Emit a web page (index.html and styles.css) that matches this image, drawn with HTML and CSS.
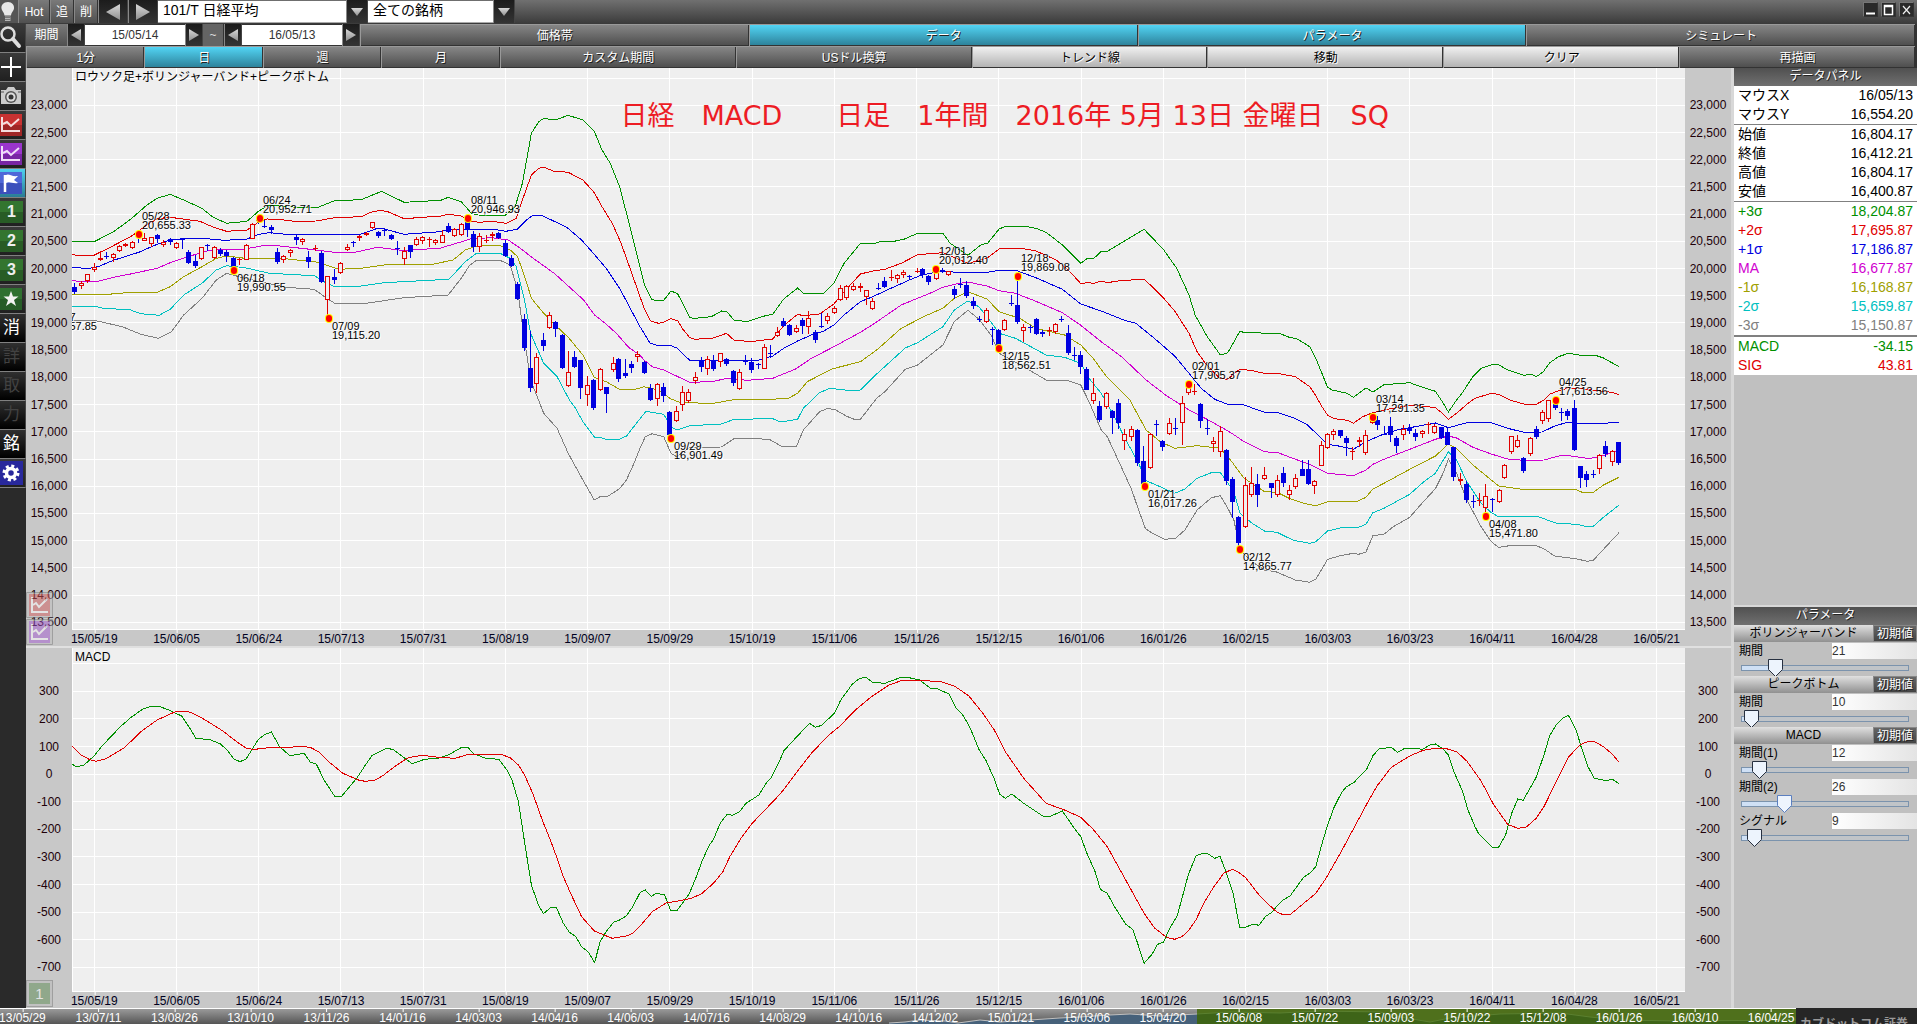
FILE: index.html
```html
<!DOCTYPE html>
<html lang="ja">
<head>
<meta charset="utf-8">
<title>101/T 日経平均</title>
<link rel="stylesheet" href="styles.css">
</head>
<body>
<header class="topbar">
  <button class="tool bulb" aria-label="ヒント"><svg width="18" height="22" viewBox="0 0 18 22"><path d="M8 1C3.500 1 1 4 1.500 7.500C2 10.500 4 11 4.500 14.500H11C11.500 11 13.500 10.500 14 7.500C14.500 4 12 1 8 1Z" fill="#e8e8e8"/><path d="M5 15.500h5.500v4.500h-5.500z" fill="#b5b5b5"/><path d="M5 16.500h5.500M5 18.500h5.500" stroke="#777"/></svg></button>
  <button class="tool hot">Hot</button>
  <button class="tool kanji">追</button>
  <button class="tool kanji">削</button>
  <button class="arrow wide" aria-label="前の銘柄"><svg width="14" height="16" viewBox="0 0 14 16"><path d="M14 0V16L0 8Z" fill="url(#metal)"/></svg></button>
  <button class="arrow wide" aria-label="次の銘柄"><svg width="14" height="16" viewBox="0 0 14 16"><path d="M0 0V16L14 8Z" fill="url(#metal)"/></svg></button>
  <select class="symbol" aria-label="銘柄"><option>101/T 日経平均</option></select>
  <button class="arrow drop" aria-label="銘柄を開く"><svg width="12" height="8" viewBox="0 0 12 8"><path d="M0 0H12L6 8Z" fill="url(#metal)"/></svg></button>
  <select class="group" aria-label="グループ"><option>全ての銘柄</option></select>
  <button class="arrow drop" aria-label="グループを開く"><svg width="12" height="8" viewBox="0 0 12 8"><path d="M0 0H12L6 8Z" fill="url(#metal)"/></svg></button>
  <div class="window-buttons">
    <button aria-label="最小化"><svg width="13" height="13" viewBox="0 0 13 13"><path d="M2 10.500H11" stroke="#fff" stroke-width="2"/></svg></button>
    <button aria-label="最大化"><svg width="13" height="13" viewBox="0 0 13 13"><path d="M2.500 2.500h8v9h-8zM2 3.500h9" stroke="#fff" fill="none" stroke-width="1.500"/></svg></button>
    <button aria-label="閉じる"><svg width="13" height="13" viewBox="0 0 13 13"><path d="M3 3L10 11M10 3L3 11" stroke="#eee" stroke-width="1.200"/></svg></button>
  </div>
  <svg class="defs" width="0" height="0"><defs><linearGradient id="metal" x1="0" y1="0" x2="0" y2="1"><stop offset="0" stop-color="#d8d8d8"/><stop offset="1" stop-color="#909090"/></linearGradient></defs></svg>
</header>

<div class="workspace">
  <nav class="sidebar" aria-label="ツール">
    <button aria-label="検索"><svg viewBox="0 0 26 28"><circle cx="8" cy="10" r="6.500" fill="none" stroke="#ddd" stroke-width="2.500"/><path d="M13 15L19 22" stroke="#ddd" stroke-width="4" stroke-linecap="round"/></svg></button>
    <button aria-label="十字"><svg viewBox="0 0 26 28"><path d="M11 4V24M1 14H21" stroke="#fff" stroke-width="2"/></svg></button>
    <button aria-label="撮影"><svg viewBox="0 0 26 28"><path d="M1 8H6L8 5H14L16 8H21V22H1Z" fill="#ccc"/><circle cx="11" cy="15" r="6" fill="#555"/><circle cx="11" cy="15" r="4.500" fill="#ddd"/><circle cx="11" cy="15" r="2.500" fill="#333"/><path d="M1 10h3M18 10h3" stroke="#555"/></svg></button>
    <button aria-label="赤チャート"><svg viewBox="0 0 26 28"><path d="M0 3H22V25H0Z" fill="#c83232"/><path d="M0 14H22V25H0Z" fill="#a02626"/><path d="M2 6V20H20M3 13L7 11L11 15L19 8" fill="none" stroke="#f4dede" stroke-width="2"/></svg></button>
    <button aria-label="紫チャート"><svg viewBox="0 0 26 28"><path d="M0 3H22V25H0Z" fill="#9a35cc"/><path d="M0 14H22V25H0Z" fill="#7826a4"/><path d="M2 6V20H20M3 13L7 11L11 15L19 8" fill="none" stroke="#efdef8" stroke-width="2"/></svg></button>
    <button class="on" aria-label="フラグ"><svg viewBox="0 0 26 28"><path d="M0 3H22V25H0Z" fill="#4f68d8"/><path d="M0 14H22V25H0Z" fill="#3c50bc"/><path d="M5 6V23" stroke="#fff" stroke-width="2.500"/><path d="M6 6C9 4 11 8 18 7L14 11L18 14C12 15 10 12 6 14Z" fill="#fff"/></svg></button>
    <button><span class="green">1</span></button>
    <button><span class="green">2</span></button>
    <button><span class="green">3</span></button>
    <button aria-label="お気に入り"><svg viewBox="0 0 26 28"><path d="M0 3H22V25H0Z" fill="#2f7030"/><path d="M0 14H22V25H0Z" fill="#265c27"/><path d="M11 6L13 11.500H18.500L14 15L16 21L11 17.500L6 21L8 15L3.500 11.500H9Z" fill="#f2f2f2"/></svg></button>
    <button class="dark">消</button>
    <button class="dark" disabled>詳</button>
    <button class="dark" disabled>取</button>
    <button class="dark" disabled>力</button>
    <button class="dark">銘</button>
    <button aria-label="設定"><svg viewBox="0 0 26 28"><path d="M0 2H23V26H0Z" fill="#28289c"/><circle cx="11" cy="14" r="4.500" fill="none" stroke="#fff" stroke-width="3.500"/><circle cx="11" cy="14" r="7" fill="none" stroke="#fff" stroke-width="3" stroke-dasharray="3 2.500"/></svg></button>
  </nav>

  <div class="main">
    <div class="row period">
      <span class="cell">期間</span>
      <button class="arrow" aria-label="開始を前へ"><svg width="10" height="12" viewBox="0 0 10 12"><path d="M10 0V12L0 6Z" fill="url(#metal)"/></svg></button>
      <input type="text" value="15/05/14" aria-label="開始日">
      <button class="arrow" aria-label="開始を次へ"><svg width="10" height="12" viewBox="0 0 10 12"><path d="M0 0V12L10 6Z" fill="url(#metal)"/></svg></button>
      <span class="tilde">~</span>
      <button class="arrow" aria-label="終了を前へ"><svg width="10" height="12" viewBox="0 0 10 12"><path d="M10 0V12L0 6Z" fill="url(#metal)"/></svg></button>
      <input type="text" value="16/05/13" aria-label="終了日">
      <button class="arrow" aria-label="終了を次へ"><svg width="10" height="12" viewBox="0 0 10 12"><path d="M0 0V12L10 6Z" fill="url(#metal)"/></svg></button>
      <button class="tab">価格帯</button>
      <button class="tab active">データ</button>
      <button class="tab active">パラメータ</button>
      <button class="tab">シミュレート</button>
    </div>
    <div class="row">
      <button class="tab">1分</button>
      <button class="tab active">日</button>
      <button class="tab">週</button>
      <button class="tab">月</button>
      <button class="tab double">カスタム期間</button>
      <button class="tab double">USドル換算</button>
      <button class="tab double light">トレンド線</button>
      <button class="tab double light">移動</button>
      <button class="tab double light">クリア</button>
      <button class="tab double">再描画</button>
    </div>

    <div class="content">
      <main class="charts">
        <section class="chart price">
          <div class="y-axis left" data-axis="price"></div>
          <div class="plot">
            <svg id="price" viewBox="72 68 1613 562" preserveAspectRatio="none"></svg>
            <div class="marks" id="marks"></div>
            <div class="caption">ロウソク足+ボリンジャーバンド+ピークボトム</div>
            <div class="headline">日経　MACD　　日足　1年間　2016年 5月 13日 金曜日　SQ</div>
          </div>
          <div class="y-axis" data-axis="price"></div>
          <div class="x-axis"></div>
          <div class="badges">
            <svg width="27" height="26" viewBox="0 0 27 26"><path d="M.5 .5H26.500V25.500H.5Z" fill="#c0c0c0" stroke="#777"/><path d="M3 2H24V24H3Z" fill="#d05a5a"/><path d="M6 5V20H22M7 13L10 11L13 15L21 7" fill="none" stroke="#fff" stroke-width="2"/></svg>
            <svg width="27" height="26" viewBox="0 0 27 26"><path d="M.5 .5H26.500V25.500H.5Z" fill="#c0c0c0" stroke="#777"/><path d="M3 2H24V24H3Z" fill="#a45ad0"/><path d="M6 5V20H22M7 13L10 11L13 15L21 7" fill="none" stroke="#fff" stroke-width="2"/></svg>
          </div>
        </section>
        <section class="chart macd">
          <div class="y-axis left" data-axis="macd"></div>
          <div class="plot">
            <svg id="macd" viewBox="72 648 1613 344" preserveAspectRatio="none"></svg>
            <div class="caption">MACD</div>
          </div>
          <div class="y-axis" data-axis="macd"></div>
          <div class="x-axis"></div>
          <div class="badges"><span class="one">1</span></div>
        </section>
      </main>

      <aside class="panel">
        <h2>データパネル</h2>
        <table>
          <tbody><tr><th>マウスX</th><td>16/05/13</td></tr><tr><th>マウスY</th><td>16,554.20</td></tr></tbody>
          <tbody><tr><th>始値</th><td>16,804.17</td></tr><tr><th>終値</th><td>16,412.21</td></tr><tr><th>高値</th><td>16,804.17</td></tr><tr><th>安値</th><td>16,400.87</td></tr></tbody>
          <tbody><tr class="c-green"><th>+3σ</th><td>18,204.87</td></tr><tr class="c-red"><th>+2σ</th><td>17,695.87</td></tr><tr class="c-blue"><th>+1σ</th><td>17,186.87</td></tr><tr class="c-magenta"><th>MA</th><td>16,677.87</td></tr><tr class="c-olive"><th>-1σ</th><td>16,168.87</td></tr><tr class="c-cyan"><th>-2σ</th><td>15,659.87</td></tr><tr class="c-gray"><th>-3σ</th><td>15,150.87</td></tr></tbody>
          <tbody class="thick"><tr class="c-green"><th>MACD</th><td>-34.15</td></tr><tr class="c-red"><th>SIG</th><td>43.81</td></tr></tbody>
        </table>
        <div class="params">
          <h2>パラメータ</h2>
          <div class="param-head"><h3>ボリンジャーバンド</h3><button>初期値</button></div>
          <div class="param"><label for="p1">期間</label><input id="p1" type="text" value="21"></div>
          <input class="slider" style="--f:20%" type="range" min="2" max="114" value="21" aria-label="ボリンジャーバンド 期間">
          <div class="param-head"><h3>ピークボトム</h3><button>初期値</button></div>
          <div class="param"><label for="p2">期間</label><input id="p2" type="text" value="10"></div>
          <input class="slider" style="--f:5%" type="range" min="9" max="86" value="10" aria-label="ピークボトム 期間">
          <div class="param-head"><h3>MACD</h3><button>初期値</button></div>
          <div class="param"><label for="p3">期間(1)</label><input id="p3" type="text" value="12"></div>
          <input class="slider" style="--f:10%" type="range" min="2" max="153" value="12" aria-label="MACD 期間(1)">
          <div class="param"><label for="p4">期間(2)</label><input id="p4" type="text" value="26"></div>
          <input class="slider lit" style="--f:25%" type="range" min="2" max="107" value="26" aria-label="MACD 期間(2)">
          <div class="param"><label for="p5">シグナル</label><input id="p5" type="text" value="9"></div>
          <input class="slider" style="--f:7%" type="range" min="2" max="208" value="9" aria-label="MACD シグナル">
        </div>
      </aside>
    </div>
  </div>
</div>

<footer class="navigator">
  <div class="timeline" id="timeline">
    <svg viewBox="0 1009 1796 15" preserveAspectRatio="none">
      <path d="M889 1024V1023L905 1022L920 1020L945 1021L958 1023L980 1020L1000 1022L1060 1018L1080 1017L1110 1015L1130 1014L1160 1016L1197 1014V1024Z" fill="#46617a"/>
      <path d="M889 1023L905 1022L920 1020L945 1021L958 1023L980 1020L1000 1022L1060 1018L1080 1017L1110 1015L1130 1014L1160 1016L1197 1014" fill="none" stroke="#c0c0c0"/>
      <path d="M1197 1009H1796V1024H1197Z" fill="#4f701c"/>
      <path d="M1197 1014L1230 1012L1280 1013L1320 1011L1380 1012L1400 1017L1430 1022L1450 1018L1500 1014L1560 1013L1590 1017L1620 1020L1680 1021L1796 1020V1024H1197Z" fill="#3e6418"/>
      <path d="M1197 1014L1230 1012L1280 1013L1320 1011L1380 1012L1400 1017L1430 1022L1450 1018L1500 1014L1560 1013L1590 1017L1620 1020L1680 1021L1796 1020" fill="none" stroke="#5b8030"/>
    </svg>
  </div>
  <div class="brand">カブドットコム証券</div>
</footer>
<script src="chart.js"></script>
</body>
</html>
```

FILE: styles.css
```css
* { box-sizing: border-box; }
body {
  margin: 0;
  height: 100vh;
  display: flex;
  flex-direction: column;
  overflow: hidden;
  background: #262626;
  color: #000;
  font: 12px/16px "Liberation Sans", "Noto Sans CJK JP", sans-serif;
}
button, input, select { font: inherit; border: 0; border-radius: 0; margin: 0; padding: 0; }
button { display: flex; align-items: center; justify-content: center; overflow: hidden; white-space: nowrap; }
h2, h3 { margin: 0; font-size: 12px; font-weight: 400; text-align: center; }

/* top bar */
.topbar { flex: none; display: flex; height: 24px; background: linear-gradient(#707070, #3a3a3a); }
.defs { position: absolute; }
.tool { height: 23px; color: #fff; background: linear-gradient(#7a7a7a, #505050); border-right: 1px solid #333; border-left: 1px solid #888; }
.bulb { width: 18px; background: #555; border: 0; }
.hot { width: 32px; }
.kanji { width: 24px; }
.arrow { flex: none; width: 18px; background: linear-gradient(#1c1c1c, #343434); border-left: 1px solid #888; border-right: 1px solid #444; }
.arrow.wide { width: 30px; height: 23px; }
.arrow.drop { width: 22px; height: 23px; }
.topbar select { appearance: none; height: 22px; margin-top: 1px; padding: 0 0 3px 5px; font-size: 14px; background: #fff; color: #000; border-bottom: 1px solid #aaa; }
.symbol { width: 188px; }
.group { width: 125px; }
.window-buttons { margin-left: auto; display: flex; gap: 3px; padding: 2px 3px 0 0; }
.window-buttons button { width: 15px; height: 15px; background: #2a2a2a; border: 1px solid #777; border-right-color: #333; border-bottom-color: #333; }

/* left tool strip */
.workspace { flex: 1; min-height: 0; display: flex; }
.sidebar { flex: none; width: 26px; display: flex; flex-direction: column; background: #2a2a2a; }
.sidebar button { flex: none; width: 26px; height: 29px; justify-content: flex-start; background: linear-gradient(#3a3a3a, #202020); border-right: 1px solid #444; border-bottom: 1px solid #808080; }
.sidebar svg { flex: none; width: 26px; height: 28px; }
.sidebar .on { background: linear-gradient(#4fd0f0, #2a7c94); }
.green { width: 23px; height: 22px; line-height: 22px; font-size: 16px; font-weight: 700; color: #eee; background: linear-gradient(#33752f 50%, #285c25 50%); }
.sidebar .dark { font-size: 17px; padding-left: 3px; color: #fff; background: linear-gradient(#303030, #000); }
.sidebar .dark:disabled { color: #424242; }

/* tab rows */
.main { flex: 1; min-width: 0; display: flex; flex-direction: column; }
.row { flex: none; display: flex; height: 22px; padding-right: 2px; background: #333; }
.tab { flex: 1 1 0; color: #fff; background: linear-gradient(#868686, #4c4c4c); border: solid #999; border-width: 1px 0 0 1px; box-shadow: inset -1px -1px #333; text-shadow: 1px 1px #222; }
.tab.double { flex-grow: 2; }
.tab.active { background: linear-gradient(#52d4f4, #2c7f97); }
.tab.light { color: #000; background: linear-gradient(#f0f0f0, #b0b0b0); text-shadow: 1px 1px #fff; }
.cell { width: 41px; line-height: 22px; text-align: center; color: #fff; background: linear-gradient(#7a7a7a, #505050); }
.tilde { width: 20px; margin-right: 1px; line-height: 22px; text-align: center; color: #ddd; background: #646464; }
.period input { width: 100px; height: 20px; margin-top: 1px; text-align: center; color: #333; background: #fff; }

/* charts */
.content { flex: 1; min-height: 0; display: flex; }
.charts { flex: 1; min-width: 0; display: flex; flex-direction: column; gap: 2px; background: #e0e0e0; }
.chart { position: relative; display: grid; grid-template-columns: 46px minmax(0, 1fr) 46px; grid-template-rows: minmax(0, 1fr) 16px; background: #c8c8c8; min-height: 0; }
.price { flex: 578 1 0; }
.macd { flex: 360 1 0; }
.plot { position: relative; overflow: hidden; background: #efefef; }
.plot svg { position: absolute; inset: 0; width: 100%; height: 100%; }
.caption { position: relative; padding: 1px 3px; }
.headline { position: absolute; left: 34%; top: 28px; font: 27px/40px "DejaVu Sans", "Noto Sans CJK JP", sans-serif; color: #ed1c24; white-space: pre; }
.y-axis { position: relative; color: #200008; }
.y-axis span { position: absolute; left: 0; width: 100%; margin-top: -8px; text-align: center; }
.x-axis { position: relative; grid-column: 2; color: #000020; }
.x-axis span { position: absolute; top: 1px; transform: translateX(-50%); }
.x-axis span::before, .timeline span::before { content: ""; position: absolute; left: 50%; top: -1px; width: 1px; height: 3px; background: #fff; }
.mark { position: absolute; width: 6px; height: 7px; margin: -3px; border-radius: 3px; background: #f00; box-shadow: 0 0 0 1px #ff0; }
.peak { position: absolute; margin-left: 3px; font-size: 11px; line-height: 9px; white-space: pre; text-shadow: 1px 1px #fff; }
.peak.above { margin-top: -22px; }
.peak.below { margin-top: 4px; }
.badges { position: absolute; left: 0; bottom: 0; display: flex; flex-direction: column; gap: 1px; padding-bottom: 1px; opacity: .5; }
.one { width: 27px; height: 27px; line-height: 22px; font-size: 15px; text-align: center; color: #fff; background: #5a8a50; border: 3px solid #bbb; outline: 1px solid #777; outline-offset: -1px; }

/* right panel */
.panel { flex: none; width: 186px; display: flex; flex-direction: column; background: #c0c0c0; border-left: 3px solid #d8d8d8; }
.panel h2 { height: 18px; line-height: 17px; color: #fff; background: linear-gradient(#505050, #707070); text-shadow: 1px 1px #222; }
.panel table { width: 100%; border-collapse: collapse; background: #fff; font-size: 14px; line-height: 19px; }
.panel th, .panel td { padding: 0 4px; font-weight: 400; text-align: left; height: 19px; }
.panel td { text-align: right; }
.panel tbody + tbody { border-top: 1px solid #808080; }
.panel tbody.thick { border-top: 2px solid #808080; }
.c-green { color: #009000; }
.c-red { color: #e00000; }
.c-blue { color: #0000e0; }
.c-magenta { color: #d000d0; }
.c-olive { color: #a0a000; }
.c-cyan { color: #00c0c0; }
.c-gray { color: #808080; }
.params { height: 403px; margin-top: auto; border-top: 2px solid #d8d8d8; display: flex; flex-direction: column; }
.param-head { display: flex; height: 17px; }
.param-head h3 { flex: 1; line-height: 17px; background: linear-gradient(#e0e0e0, #909090); }
.param-head button { width: 44px; color: #fff; background: linear-gradient(#666, #444); border: 1px solid #888; text-shadow: 1px 1px #222; }
.param { display: flex; height: 17px; padding-top: 1px; }
.param label { flex: 1; padding-left: 5px; }
.param input { width: 85px; height: 16px; color: #333; background: linear-gradient(90deg, #fff, #e4e4e4); }
.slider {
  --thumb: url("data:image/svg+xml,%3Csvg xmlns='http://www.w3.org/2000/svg' width='15' height='18'%3E%3Cpath d='M.5.5h14v10l-7 7-7-7z' fill='%23edf4fd' stroke='%23273040'/%3E%3C/svg%3E");
  appearance: none; flex: none; width: auto; height: 17px; margin: 0 8px 0 7px; background: none;
}
.slider.lit { --thumb: url("data:image/svg+xml,%3Csvg xmlns='http://www.w3.org/2000/svg' width='15' height='18'%3E%3Cpath d='M.5.5h14v10l-7 7-7-7z' fill='%23edf4fd' stroke='%235b7fc0'/%3E%3C/svg%3E"); }
.slider::-webkit-slider-runnable-track { height: 6px; border: 1px solid #7b93ad; background: linear-gradient(90deg, #cfe0f5 var(--f), #c0c4c8 var(--f)); }
.slider::-webkit-slider-thumb { appearance: none; width: 15px; height: 18px; margin-top: -7px; background: var(--thumb); }

/* bottom navigator */
.navigator { flex: none; display: flex; height: 16px; }
.timeline { position: relative; flex: 1; overflow: hidden; border-top: 1px solid #fff; color: #fff; background: linear-gradient(#999, #555); }
.timeline svg { position: absolute; inset: 0; width: 100%; height: 100%; }
.timeline span { position: absolute; top: 1px; transform: translateX(-50%); }
.brand { width: 121px; padding: 8px 0 0 4px; overflow: hidden; white-space: nowrap; font-weight: 700; color: #999; background: #262626; }
```

FILE: chart.js
```js
// Chart space: x 72..1685; price pane y 68..630; MACD pane y 648..992.
const X0 = 72, W = 1613;
const dates = "15/05/19 15/06/05 15/06/24 15/07/13 15/07/31 15/08/19 15/09/07 15/09/29 15/10/19 15/11/06 15/11/26 15/12/15 16/01/06 16/01/26 16/02/15 16/03/03 16/03/23 16/04/11 16/04/28 16/05/21".split(" ");
const dateX = i => 94.3 + 82.23 * i;
const priceY = v => 105.3 + (23000 - v) * 0.05442;
const macdY = v => 691.3 + (300 - v) * 0.276;

// Each series is stored in three spans; a span has its own origin.
const SX = 2.45, SY = 3;
const price = [[0, 0], [640, 200], [1277, 360]];
const lower = [[0, 660], [640, 660], [1277, 600]];

const bands = [
  ["#009000",
   "177,724 200,726 231,725 278,695 320,658 360,615 385,595 417,583 450,600 495,625 520,650 555,670 605,664 635,632 660,615 700,620 775,624 820,602 885,599 935,574 990,607 1080,601 1098,592 1130,605 1155,640 1170,645 1238,646 1262,620 1280,550 1302,400 1320,365 1332,355 1360,360 1392,346 1428,360 1456,394 1475,450 1495,490 1518,560 1535,640 1568,800",
   "11,255 28,297 35,301 58,301 76,273 92,281 105,312 122,353 135,355 175,350 200,333 212,334 230,360 262,365 305,348 325,343 352,297 386,264 400,280 450,280 475,250 500,190 540,130 570,132 592,124 615,126 648,117 680,100 742,100 760,130 803,166 835,135 852,129 880,87 895,79 915,81 945,79 970,85 995,97 1035,135 1080,190 1095,176 1113,174 1130,154 1142,156 1235,88 1282,148 1315,205 1345,285 1360,345 1390,410 1422,465 1440,458 1470,393 1480,398 1560,400",
   "0,-80 10,-78 30,-68 50,-63 80,-40 95,-5 110,40 124,82 135,90 172,100 187,112 218,84 235,96 262,74 325,68 360,83 388,94 405,125 420,156 440,120 452,102 480,50 500,25 530,13 543,14 565,30 605,46 625,43 635,50 652,36 668,8 690,-10 714,-20 745,-14 780,-14 800,-6 838,20"],
  ["#e00000",
   "177,764 190,766 230,766 270,742 320,710 360,675 385,656 417,652 490,664 520,680 555,694 605,690 635,665 655,657 690,659 720,664 775,663 820,653 885,650 905,638 930,631 950,635 990,656 1080,648 1098,643 1130,648 1155,664 1175,667 1205,664 1240,670 1265,655 1280,600 1302,525 1320,505 1333,502 1355,513 1392,517 1428,540 1456,578 1475,620 1500,670 1520,725 1535,775 1568,890",
   "10,325 25,362 45,370 58,367 76,356 92,362 105,388 122,413 135,418 180,414 212,400 230,420 270,425 325,417 352,377 386,343 400,347 440,342 475,312 500,275 540,222 570,213 600,208 640,190 680,164 742,158 803,190 850,175 880,147 895,145 940,146 970,153 1020,180 1055,217 1080,251 1100,247 1110,251 1130,243 1145,248 1170,243 1235,237 1280,290 1310,333 1345,400 1365,455 1385,490 1420,535 1440,538 1470,507 1500,512 1530,520 1560,520",
   "0,40 45,50 80,80 95,107 110,140 124,165 140,176 172,181 187,190 210,170 235,158 262,150 330,135 370,140 388,143 405,160 420,178 440,160 465,133 485,115 525,100 543,103 570,120 605,132 635,133 655,120 668,103 690,92 714,84 745,86 820,97 838,104"],
  ["#0000e0",
   "177,803 220,805 240,800 280,780 340,757 385,733 417,720 450,716 495,715 550,721 605,717 635,703 660,698 700,703 780,704 820,704 885,702 920,687 935,685 990,703 1080,695 1100,688 1155,690 1210,688 1240,694 1268,687 1290,660 1305,646 1330,648 1360,665 1390,683 1425,720 1456,763 1485,805 1518,865 1568,980",
   "25,430 45,437 76,437 92,445 105,462 122,481 200,481 240,481 290,481 325,468 352,445 386,423 420,405 450,393 475,375 500,345 540,305 570,290 620,262 660,240 690,225 742,213 775,217 803,219 850,217 880,211 925,213 970,233 1035,268 1080,312 1130,333 1185,360 1215,370 1260,415 1310,468 1345,520 1375,565 1408,598 1440,613 1475,613 1530,637 1560,639",
   "0,157 40,173 75,195 100,225 124,253 155,259 187,268 218,245 262,222 300,208 325,203 388,189 420,203 465,188 525,188 565,205 605,217 650,216 680,198 714,186 740,190 800,190 838,187"],
  ["#d000d0",
   "177,841 190,844 240,844 278,832 320,822 385,805 417,788 460,770 510,752 540,747 600,747 640,738 680,737 760,748 820,757 870,757 925,742 990,752 1080,744 1110,733 1155,716 1205,713 1245,720 1275,745 1302,771 1360,822 1430,900 1456,944 1485,972 1510,1000 1540,1042 1568,1066",
   "10,480 30,500 58,510 122,547 175,545 215,535 262,541 325,535 380,508 420,475 475,440 540,397 575,370 640,315 710,280 742,262 775,252 803,246 850,258 880,272 920,280 970,304 1035,338 1080,376 1130,425 1180,470 1240,540 1290,587 1345,630 1380,652 1422,680 1450,700 1480,725 1530,755 1560,758",
   "0,277 45,298 80,313 124,340 187,347 218,330 235,313 262,298 325,268 388,238 420,228 440,234 480,262 525,282 565,297 605,301 655,300 690,288 714,287 760,295 785,293 838,270"],
  ["#a0a000",
   "177,883 265,883 320,877 385,877 417,860 450,830 495,800 530,775 555,768 600,775 690,775 780,787 830,808 885,805 940,795 1060,793 1110,780 1140,750 1170,737 1225,737 1250,750 1268,770 1285,828 1302,895 1332,940 1360,975 1392,1012 1428,1065 1456,1132 1485,1145 1518,1168 1550,1170 1568,1164",
   "10,560 45,570 76,597 100,608 180,610 235,598 325,598 365,594 386,580 410,545 470,507 540,485 580,450 640,385 700,347 742,325 770,295 803,275 850,297 880,335 930,355 970,385 1040,405 1080,435 1110,475 1140,525 1200,600 1240,690 1275,725 1310,745 1365,737 1422,745 1450,785 1480,835 1530,875 1560,877",
   "0,397 30,415 65,430 95,437 125,425 195,425 218,412 235,387 262,370 325,328 388,288 420,252 440,265 480,315 525,360 543,378 600,388 735,390 748,397 775,397 800,375 838,352"],
  ["#00c0c0",
   "177,919 235,919 250,924 320,930 345,941 390,946 417,928 450,885 495,850 530,810 555,797 600,803 660,820 770,827 800,850 820,860 885,858 940,848 1100,838 1140,785 1165,762 1225,760 1250,775 1265,800 1285,900 1300,1000 1332,1090 1365,1130 1395,1200 1410,1225 1428,1265 1458,1314 1470,1312 1485,1318 1518,1318 1535,1308 1568,1256",
   "15,634 58,643 76,680 90,690 122,677 200,672 230,658 325,656 345,666 386,658 400,625 440,578 465,565 525,573 540,570 580,522 650,444 680,428 742,380 770,330 803,303 830,320 850,350 880,400 920,415 995,465 1040,472 1080,490 1100,535 1130,580 1160,645 1190,720 1220,785 1240,842 1270,858 1310,880 1335,867 1365,835 1400,818 1422,818 1435,840 1455,875 1470,940 1500,970 1530,993 1560,997",
   "0,517 40,541 80,550 95,545 124,513 155,504 200,502 218,493 235,458 262,445 325,403 360,365 388,340 405,305 420,276 440,300 465,365 500,430 525,458 543,470 640,470 685,490 735,493 755,499 775,499 800,472 838,435"],
  ["#808080",
   "177,962 235,962 300,980 345,1003 388,1015 420,995 450,945 495,895 530,840 555,820 600,835 700,862 770,868 795,890 820,910 885,912 990,893 1098,885 1130,835 1150,797 1165,783 1225,781 1250,795 1268,870 1285,1020 1300,1140 1332,1240 1365,1285 1392,1360 1428,1440 1456,1500 1470,1490 1490,1488 1518,1466 1535,1440 1555,1385 1568,1345",
   "13,710 30,701 58,710 76,760 90,770 122,742 200,741 230,716 285,715 320,720 345,738 383,740 400,690 440,635 460,625 480,630 505,648 525,658 540,658 580,595 600,575 650,508 680,495 742,435 770,365 803,331 830,357 860,405 880,460 940,500 995,540 1045,540 1080,555 1100,605 1130,690 1145,710 1175,790 1205,870 1220,925 1238,985 1255,1000 1285,1018 1312,1015 1335,990 1365,930 1400,893 1422,887 1440,925 1455,960 1470,1050 1500,1085 1530,1110 1560,1116",
   "0,637 45,660 80,667 95,658 124,598 155,587 187,580 200,583 218,576 235,527 262,523 285,500 325,472 355,430 388,386 405,345 420,298 440,340 465,420 500,500 525,545 543,562 570,557 635,557 655,567 680,588 735,597 760,604 775,601 800,568 838,518"]
];

const oscillators = [
  ["#009000",
   "177,313 187,320 205,316 231,287 250,258 295,200 320,173 350,147 370,139 390,139 415,151 445,168 465,205 480,235 515,239 540,252 558,272 572,296 588,305 603,297 633,238 650,223 665,216 685,260 710,287 745,280 760,306 775,312 795,362 820,409 837,409 875,353 897,312 912,286 948,264 965,270 1010,311 1040,298 1075,294 1100,284 1128,264 1146,262 1160,281 1190,295 1222,298 1242,330 1255,362 1270,425 1285,545 1302,675 1318,732 1331,761 1350,742 1363,742 1380,790 1395,817 1410,829 1425,860 1442,877 1457,908 1470,845 1485,815 1503,787 1518,780 1535,767 1550,740 1568,698",
   "13,690 28,709 40,700 60,704 75,751 91,751 120,703 140,645 152,603 170,555 180,538 197,488 214,463 227,466 243,456 260,430 291,405 310,368 322,352 340,308 352,273 375,242 415,190 430,202 445,196 476,160 492,120 520,73 537,56 553,52 570,67 600,70 640,52 655,52 685,60 712,85 728,86 757,102 773,142 788,160 803,190 815,222 830,268 848,302 868,357 881,402 895,415 911,402 940,430 988,469 1005,469 1035,453 1060,498 1080,530 1095,580 1115,635 1128,688 1145,700 1160,735 1190,793 1207,808 1218,845 1235,910 1255,882 1268,853 1282,847 1298,805 1316,768 1330,705 1343,645 1362,588 1378,580 1390,580 1408,595 1421,589 1437,640 1453,700 1469,802 1484,802 1502,792 1516,796 1532,770 1550,755",
   "0,917 15,900 32,888 65,832 80,820 95,800 108,740 124,675 140,622 158,578 170,560 188,548 220,507 235,467 250,447 280,442 295,457 310,447 330,444 357,448 375,435 388,432 405,445 420,465 435,520 455,575 468,630 485,680 495,703 528,742 543,742 560,705 575,640 590,597 603,601 635,532 655,462 668,407 685,373 700,355 714,346 733,390 745,440 762,500 777,534 805,542 822,538 838,551"],
  ["#e00000",
   "177,259 200,286 220,299 235,304 260,296 305,263 345,215 385,180 430,155 455,154 470,158 500,178 545,212 585,250 605,266 625,268 665,262 710,262 735,259 760,262 780,275 810,310 840,340 880,361 895,364 920,360 940,345 970,317 1000,293 1035,286 1075,292 1115,295 1145,284 1230,284 1250,293 1270,315 1285,345 1305,400 1330,485 1350,545 1365,595 1380,650 1400,705 1425,770 1456,813 1500,835 1535,828 1550,820 1568,799",
   "30,755 65,728 90,724 125,715 150,702 180,670 203,635 220,590 250,530 275,490 345,400 385,335 420,280 460,228 490,198 525,153 565,112 610,75 640,62 690,61 740,66 770,78 805,107 840,160 868,210 895,275 940,355 995,430 1040,450 1080,472 1110,508 1145,560 1190,660 1235,760 1260,803 1290,832 1310,838 1328,830 1345,810 1362,780 1382,728 1405,682 1430,640 1451,628 1465,636 1484,653 1520,710 1550,745",
   "0,936 15,944 32,944 95,880 120,835 155,760 220,612 245,558 280,502 325,468 358,451 388,445 415,446 440,455 465,483 500,543 530,612 565,673 590,685 610,682 635,655 655,618 690,530 715,470 743,434 765,423 780,426 800,440 822,463 838,487"]
];

// Candles: colour + x, high, body top, body bottom, low.
const candles = [
  "b183 850 861 876 882,r200 843 850 857 866,r215 823 823 844 848,r231 790 801 809 815,r246 758 774 780 782,b262 755 768 770 778,r277 760 762 774 785,r293 735 739 752 755,r308 728 733 737 742,r324 722 727 743 748,b340 700 709 713 728,r355 700 714 722 724,r371 711 711 733 740,b386 702 706 717 728,r401 720 727 734 740,b417 714 717 726 735,r432 727 730 744 747,b447 714 716 718 746,b462 750 755 789 793,b479 765 783 797 803,r494 741 742 776 780,b509 732 736 738 754,r526 738 740 773 776,b540 745 751 762 767,b555 750 756 767 786,b572 772 773 802 808,r587 774 778 781 795,r603 732 736 779 781,r618 670 673 716 718,b634 650 659 661 672,b648 660 678 680 684,b665 676 681 690 701,b680 743 755 786 792,r695 766 767 780 788,r711 748 751 758 770,b726 705 711 720 735,r741 714 718 727 736,b757 753 771 786 803,r773 735 745 748 753,b788 754 758 846 848,r803 828 829 901 950,b819 806 831 839 852,r835 785 790 818 822,r851 733 742 750 752,b866 723 727 729 741,r881 706 709 713 722,r897 696 700 706 708,r913 666 667 683 686,b927 694 697 708 713,b943 683 690 692 707,b959 703 706 717 720,b974 724 744 746 765,r990 740 752 776 795,b1005 735 736 756 773,r1021 710 718 734 737,r1036 708 710 723 732,r1052 711 716 718 740,r1067 716 721 730 735,r1083 690 706 728 730,b1099 668 678 696 699,r1114 684 688 708 711,r1130 670 673 706 708,b1146 658 660 690 710,b1160 692 703 740 756,r1175 700 709 742 755,r1191 706 720 724 728,r1207 697 703 709 722,b1221 696 699 713 716,b1239 720 730 768 770,b1253 765 775 798 801,b1268 847 853 897 900,b1284 942 957 1043 1053,b1300 993 1104 1163 1176,r1315 1060 1071 1151 1178,b1331 998 1020 1037 1053,r1347 936 946 985 988,b1361 963 966 986 1010,b1377 1002 1005 1104 1107,r1394 1053 1117 1157 1160,b1408 1052 1071 1101 1105,b1422 1079 1080 1163 1197,r1440 1128 1156 1186 1218,b1454 1138 1140 1223 1230,r1470 1105 1106 1171 1173,b1486 1161 1162 1182 1240,r1502 1071 1090 1109 1115,b1515 1075 1078 1136 1146,b1532 1077 1119 1128 1135,b1547 1083 1092 1104 1119,r1562 1052 1062 1072 1086",
  "b11 483 487 518 521,b25 553 564 599 602,r42 548 553 596 617,b58 549 561 587 606,b72 633 636 704 714,r89 619 632 664 666,r104 558 577 616 633,r119 567 577 604 608,r135 517 532 544 553,b150 471 481 501 517,r166 467 478 506 525,b181 465 479 507 512,r197 460 460 487 500,b212 473 478 492 497,b228 510 513 548 558,r244 507 517 566 571,b259 465 482 484 494,b273 474 486 509 520,b290 489 493 496 508,r306 433 442 506 508,b320 435 459 461 475,r338 381 397 409 412,b352 354 363 377 382,b366 372 375 404 407,r383 374 385 397 399,b398 354 360 377 402,r414 334 354 382 403,b429 390 396 420 428,b445 340 378 380 381,r460 340 349 364 372,r476 318 325 338 341,r492 256 265 301 303,r507 256 259 295 300,r523 250 257 270 272,r539 250 257 265 277,r554 270 271 290 316,r569 293 304 326 330,b585 249 264 266 267,b599 232 243 260 263,r615 210 230 232 242,r631 222 226 238 250,r646 211 217 226 234,b661 226 228 230 241,r679 205 214 216 218,b692 205 208 225 233,b707 225 228 245 254,r726 207 216 238 240,b740 204 211 213 218,r755 213 214 224 227,b770 259 268 284 296,b785 234 252 254 265,b801 242 255 288 293,b817 292 303 318 326,b832 348 356 358 367,r848 323 331 367 370,b863 380 387 389 436,b878 386 390 436 443,r894 357 361 391 393,b909 286 308 310 317,b925 240 316 367 372,r940 371 382 394 425,b956 375 381 384 398,b971 354 357 401 404,b986 391 396 403 410,r1003 381 390 394 408,r1019 369 373 395 403,b1033 348 356 360 365,b1049 375 399 458 466,b1065 441 465 468 480,b1079 454 465 500 521,b1095 502 507 569 571,r1111 533 579 604 611,b1126 604 618 659 665,r1142 577 579 622 626,b1157 630 633 653 703,b1172 598 609 668 687,r1188 688 703 724 749,r1205 679 688 712 724,b1219 688 690 788 797,b1234 738 783 853 858,r1251 698 703 805 807,b1265 660 672 674 708,b1281 720 723 740 752,r1298 655 670 703 705,b1313 655 684 686 705,r1328 588 610 670 735,r1345 545 552 580 585,r1359 553 574 577 584,b1373 609 613 662 684,b1390 658 683 686 705,r1406 710 724 731 755,r1421 678 694 757 770,b1437 747 750 842 854,b1452 830 838 905 953,b1466 948 952 1028 1040,r1484 832 856 982 985,r1499 801 850 884 890,b1514 823 852 884 921,r1530 801 826 836 840,b1546 849 850 863 893,r1562 825 841 884 890",
  "b16 321 339 368 381,r31 376 391 404 420,r46 343 355 382 387,b62 300 328 347 349,b77 300 328 372 375,r93 360 363 377 402,r109 242 256 317 318,r124 218 223 265 267,r139 207 214 226 240,b155 209 210 228 234,b170 227 234 248 288,r186 260 274 277 299,r202 231 240 247 262,r218 209 226 280 284,r233 170 176 190 192,b246 168 180 195 210,b263 199 221 223 225,b278 171 198 224 246,b293 227 234 258 278,r310 195 207 226 239,b325 193 203 212 221,b339 208 220 230 243,r357 210 214 222 234,r372 186 193 196 221,r387 193 199 218 223,b403 200 202 234 236,b418 205 216 255 256,b433 260 261 350 362,r449 340 356 364 374,b464 364 373 420 429,b481 404 423 425 444,r497 399 420 424 437,r511 372 408 445 468,b528 414 418 420 456,r544 387 391 425 429,r558 313 316 355 357,r574 228 229 277 281,r589 225 241 262 264,b604 290 294 332 340,r620 230 235 283 287,b636 198 207 230 237,r651 150 157 184 191,r666 120 121 178 185,b682 110 122 144 151,b697 145 156 158 183,b712 148 153 167 180,b729 120 144 269 273,b743 317 319 353 384,b758 333 342 360 381,b775 330 342 344 354,r790 282 286 328 342,b805 243 259 282 291,r822 270 274 305 318,b837 246 247 308 315"
];

// Peaks and bottoms: x, y, side, date, value.
const peaks = [
  [45, 309, "below", "05/07", "19,257.85"],
  [139, 234, "above", "05/28", "20,655.33"],
  [260, 218, "above", "06/24", "20,952.71"],
  [234, 270, "below", "06/18", "19,990.55"],
  [329, 318, "below", "07/09", "19,115.20"],
  [468, 218, "above", "08/11", "20,946.93"],
  [671, 438, "below", "09/29", "16,901.49"],
  [936, 269, "above", "12/01", "20,012.40"],
  [1018, 276, "above", "12/18", "19,869.08"],
  [999, 348, "below", "12/15", "18,562.51"],
  [1145, 486, "below", "01/21", "16,017.26"],
  [1189, 384, "above", "02/01", "17,905.37"],
  [1240, 549, "below", "02/12", "14,865.77"],
  [1373, 417, "above", "03/14", "17,291.35"],
  [1486, 516, "below", "04/08", "15,471.80"],
  [1556, 400, "above", "04/25", "17,613.56"]
];

const pct = (v, from, size) => ((v - from) / size * 100) + "%";
const snap = v => Math.round(v - 0.5) + 0.5;

function grid(rows, top, bottom) {
  let d = `M72.5 ${top}V${bottom - 0.5}H1685`;
  dates.forEach((_, i) => { d += `M${snap(dateX(i))} ${top}V${bottom}`; });
  rows.forEach(y => { d += `M72 ${snap(y)}H1685`; });
  return `<path d="${d}" fill="none" stroke="#fff" shape-rendering="crispEdges"/>`;
}

function line([color, ...spans], origins) {
  const pts = spans.flatMap((s, i) => s.split(" ").map(p => {
    const [x, y] = p.split(",").map(Number);
    return (origins[i][0] + x / SX).toFixed(1) + "," + (origins[i][1] + y / SY).toFixed(1);
  }));
  return `<polyline points="${pts.join(" ")}" fill="none" stroke="${color}" shape-rendering="crispEdges"/>`;
}

function candle(str, [ox, oy]) {
  const up = str[0] === "r";
  const [x, h, t, b, l] = str.slice(1).split(" ").map(Number);
  const cx = snap(ox + x / SX);
  const [H, T, B, L] = [h, t, b, l].map(v => Math.round(oy + v / SY));
  const wick = `M${cx} ${H}V${T}M${cx} ${B}V${L}`;
  if (B - T <= 1) return `<path d="${wick}M${cx - 2.5} ${T + 0.5}H${cx + 2.5}M${cx} ${T}V${B + 1}" stroke="${up ? "#e00000" : "#0000e0"}" shape-rendering="crispEdges"/>`;
  return up
    ? `<path d="${wick}M${cx - 2} ${T + 0.5}h4V${B - 0.5}h-4Z" fill="#efefef" stroke="#e00000" shape-rendering="crispEdges"/>`
    : `<path d="${wick}M${cx - 2} ${T + 0.5}h4V${B - 0.5}h-4Z" fill="#0000e0" stroke="#0000e0" shape-rendering="crispEdges"/>`;
}

const priceTicks = Array.from({ length: 20 }, (_, i) => 23000 - 500 * i);
const macdTicks = Array.from({ length: 11 }, (_, i) => 300 - 100 * i);

document.getElementById("price").innerHTML =
  grid([priceY(23500), ...priceTicks.map(priceY)], 68, 630) +
  bands.map(b => line(b, price)).join("") +
  candles.map((s, i) => s.split(",").map(c => candle(c, price[i])).join("")).join("");

document.getElementById("macd").innerHTML =
  grid([macdY(400), ...macdTicks.map(macdY)], 648, 992) +
  oscillators.map(o => line(o, lower)).join("");

document.getElementById("marks").innerHTML = peaks.map(([x, y, side, date, value]) => {
  const at = `left:${pct(x, X0, W)};top:${pct(y, 68, 562)}`;
  return `<i class="mark" style="${at}"></i><div class="peak ${side}" style="${at}">${date}\n${value}</div>`;
}).join("");

document.querySelectorAll(".y-axis").forEach(el => {
  const isPrice = el.dataset.axis === "price";
  el.innerHTML = (isPrice ? priceTicks : macdTicks).map(v =>
    `<span style="top:${isPrice ? pct(priceY(v), 68, 562) : pct(macdY(v), 648, 344)}">${isPrice ? v.toLocaleString("en-US") : v}</span>`).join("");
});

document.querySelectorAll(".x-axis").forEach(el => {
  el.innerHTML = dates.map((d, i) => `<span style="left:${pct(dateX(i), X0, W)}">${d}</span>`).join("");
});

const timeline = "13/05/29 13/07/11 13/08/26 13/10/10 13/11/26 14/01/16 14/03/03 14/04/16 14/06/03 14/07/16 14/08/29 14/10/16 14/12/02 15/01/21 15/03/06 15/04/20 15/06/08 15/07/22 15/09/03 15/10/22 15/12/08 16/01/26 16/03/10 16/04/25".split(" ");
document.getElementById("timeline").insertAdjacentHTML("beforeend",
  timeline.map((d, i) => `<span style="left:${pct(22.4 + 76.03 * i, 0, 1796)}">${d}</span>`).join(""));
```
